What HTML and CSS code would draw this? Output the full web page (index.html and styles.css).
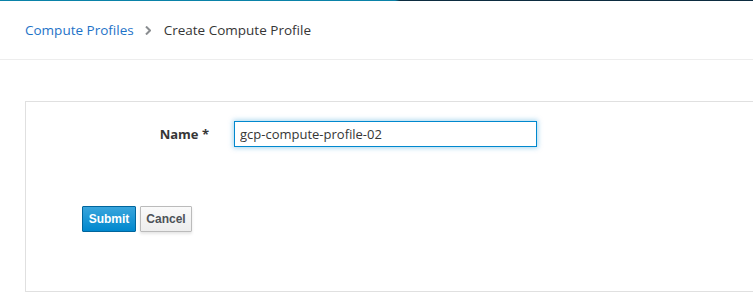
FILE: index.html
```html
<!DOCTYPE html>
<html>
<head>
	<title>Create Compute Profile</title>
	<link rel="stylesheet" href="styles.css">
</head>
<body>
	<div class="topbar"></div>
	<div class="breadcrumb">
		<a href="#">Compute Profiles</a>
		<span class="sep">
			<svg width="6" height="9" viewBox="0 0 6 9"><path d="M1 0.5 L5 4.5 L1 8.5" fill="none" stroke="#8a8d90" stroke-width="2"/></svg>
		</span>
		<span class="current">Create Compute Profile</span>
	</div>
	<div class="content">
		<div class="card">
			<form class="form">
				<div class="form-row">
					<label for="name">Name *</label>
					<input type="text" id="name" value="gcp-compute-profile-02">
				</div>
				<div class="actions">
					<button type="button" class="btn btn-primary">Submit</button>
					<button type="button" class="btn btn-default">Cancel</button>
				</div>
			</form>
		</div>
	</div>
</body>
</html>
```

FILE: styles.css
```css
* {
	margin: 0;
	padding: 0;
	box-sizing: border-box;
}
body {
	font-family: "Open Sans", "Liberation Sans", sans-serif;
	color: #363636;
	background: #fff;
	overflow: hidden;
}
.topbar {
	height: 1px;
	background: linear-gradient(to right, #0a82a8 0, #0a82a8 395px, #0c2c40 400px, #0c2c40 100%);
}
.breadcrumb {
	height: 59px;
	padding-left: 25px;
	display: flex;
	align-items: center;
	font-size: 13.5px;
	border-bottom: 1px solid #ededed;
}
.breadcrumb a {
	color: #1e73c8;
	text-decoration: none;
}
.breadcrumb .sep {
	display: flex;
	margin: 0 13px 0 11px;
}
.breadcrumb .current {
	color: #363636;
}
.content {
	padding: 41px 0 0 25px;
}
.card {
	width: 760px;
	height: 191px;
	border: 1px solid #e0e0e0;
	border-right: none;
}
.form {
	padding: 19px 0 0 56px;
}
.form-row {
	display: flex;
	align-items: center;
}
.form-row label {
	width: 127px;
	text-align: right;
	font-weight: bold;
	font-size: 13px;
	color: #363636;
}
.form-row input {
	margin-left: 25px;
	width: 303px;
	height: 26px;
	padding: 0 5px;
	font-family: inherit;
	font-size: 13px;
	color: #363636;
	border: 1px solid #0088ce;
	outline: none;
	box-shadow: 0 0 5px 1px rgba(0, 136, 206, 0.35);
}
.actions {
	display: flex;
	gap: 4px;
	margin-top: 59px;
}
.btn {
	height: 26px;
	padding: 0;
	font-family: "Liberation Sans", sans-serif;
	font-size: 12px;
	font-weight: bold;
	cursor: pointer;
	border-radius: 1px;
}
.btn-primary {
	width: 54px;
	color: #fff;
	background: linear-gradient(#39a5dc, #0088ce);
	border: 1px solid #00659c;
}
.btn-default {
	width: 52px;
	color: #4d5258;
	background: linear-gradient(#fafafa, #ededed);
	border: 1px solid #bbb;
	box-shadow: 0 2px 3px rgba(0, 0, 0, 0.1);
}
```
